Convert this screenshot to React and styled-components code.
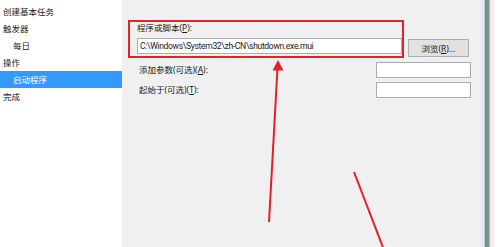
import React from 'react';
import styled, { createGlobalStyle } from 'styled-components';

const GlobalStyle = createGlobalStyle`
  html, body { margin: 0; padding: 0; background: #fff; }
  body { font-family: "Noto Sans", "Noto Sans CJK SC", sans-serif; }
`;

const Screen = styled.div`
  position: relative;
  width: 500px;
  height: 247px;
  display: flex;
  overflow: hidden;
  font-size: 8.5px;
  color: #1a1a1a;
`;

const Sidebar = styled.ul`
  width: 122px;
  margin: 0;
  padding: 3px 0 0;
  list-style: none;
  background: #ffffff;
`;

const Step = styled.li`
  height: 17px;
  line-height: 17px;
  padding-left: ${p => (p.$sub ? 13 : 3)}px;
  background: ${p => (p.$active ? '#3399ff' : 'transparent')};
  color: ${p => (p.$active ? '#fff' : '#1a1a1a')};
  white-space: nowrap;
`;

const Main = styled.div`
  flex: 1;
  background: #f0f0f0;
  padding: 20px 0 0 6px;
  display: flex;
  flex-direction: column;
  gap: 4px;
`;

const ProgramRow = styled.div`
  display: flex;
  align-items: flex-end;
  gap: 4px;
`;

const Highlight = styled.div`
  width: 276px;
  height: 38px;
  box-sizing: border-box;
  border: 2px solid #e8202a;
  padding: 0 2px 2px 7px;
  display: flex;
  flex-direction: column;
  gap: 4px;
`;

const Label = styled.label`
  display: block;
  height: 12px;
  line-height: 12px;
  white-space: nowrap;
  u { text-decoration: underline; }
`;

const TextBox = styled.div`
  box-sizing: border-box;
  width: ${p => p.$w}px;
  height: 16px;
  background: #fff;
  border: 1px solid #abadb3;
  padding-left: 2px;
  line-height: 14px;
  font-family: Roboto, "Noto Sans", sans-serif;
  font-size: 8.6px;
  letter-spacing: -0.35px;
  white-space: nowrap;
  overflow: hidden;
`;

const Button = styled.button`
  box-sizing: border-box;
  flex: none;
  width: 61px;
  height: 18px;
  margin-bottom: 1px;
  padding: 0;
  background: #e1e1e1;
  border: 1px solid #adadad;
  font: inherit;
  font-size: 8.5px;
  color: #1a1a1a;
`;

const ParamRow = styled.div`
  box-sizing: border-box;
  display: flex;
  align-items: center;
  justify-content: space-between;
  width: 343px;
  padding-left: 11px;
`;

const Edge = styled.div`
  width: 19px;
  background: linear-gradient(to right, #e4e8f2 0, #e4e8f2 3px, #c3d2dc 3px, #c3d2dc 4px,
    #6e8a86 4px, #7f9894 8px, #f2e4e6 9px, #fff 15px);
`;

const Overlay = styled.svg`
  position: absolute;
  inset: 0;
  pointer-events: none;
`;

export default function App() {
  return (
    <>
      <GlobalStyle />
      <Screen>
        <Sidebar>
          <Step>创建基本任务</Step>
          <Step>触发器</Step>
          <Step $sub>每日</Step>
          <Step>操作</Step>
          <Step $sub $active>启动程序</Step>
          <Step>完成</Step>
        </Sidebar>
        <Main>
          <ProgramRow>
            <Highlight>
              <Label>程序或脚本(<u>P</u>):</Label>
              <TextBox $w={265}>C:\Windows\System32\zh-CN\shutdown.exe.mui</TextBox>
            </Highlight>
            <Button>浏览(<u>R</u>)...</Button>
          </ProgramRow>
          <ParamRow>
            <Label>添加参数(可选)(<u>A</u>):</Label>
            <TextBox $w={95} />
          </ParamRow>
          <ParamRow>
            <Label>起始于(可选)(<u>T</u>):</Label>
            <TextBox $w={95} />
          </ParamRow>
        </Main>
        <Edge />
        <Overlay width="500" height="247" viewBox="0 0 500 247">
          <line x1="269" y1="222" x2="277.5" y2="68" stroke="#e61e28" strokeWidth="2" />
          <polygon points="278,60 272.5,70.5 283.5,70.5" fill="#e61e28" />
          <line x1="354" y1="172" x2="384" y2="250" stroke="#e61e28" strokeWidth="2" />
        </Overlay>
      </Screen>
    </>
  );
}
